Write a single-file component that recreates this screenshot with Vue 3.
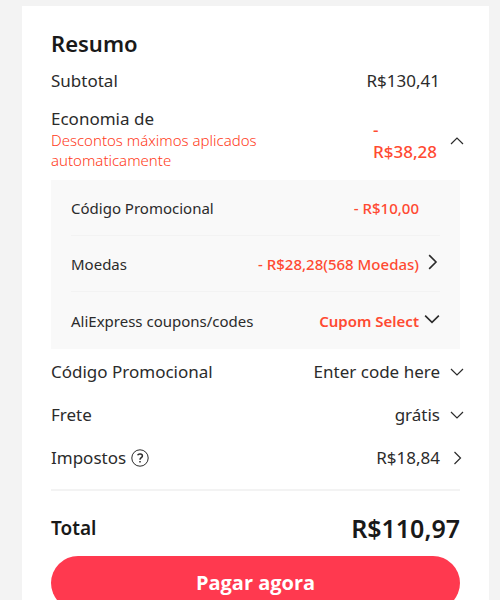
<script setup>
import { ref } from 'vue'

const savingsOpen = ref(true)

// rows of the expanded savings panel
const savings = [
  { label: 'Código Promocional', value: '- R$10,00' },
  { label: 'Moedas', value: '- R$28,28(568 Moedas)', icon: 'right' },
  { label: 'AliExpress coupons/codes', value: 'Cupom Select', icon: 'down', strong: true }
]

const rows = [
  { label: 'Código Promocional', value: 'Enter code here', icon: 'down' },
  { label: 'Frete', value: 'grátis', icon: 'down' },
  { label: 'Impostos', value: 'R$18,84', icon: 'right', help: true }
]

const arrows = {
  up: 'M1 10 L7 4 L13 10',
  down: 'M1 4 L7 10 L13 4',
  right: 'M4.5 1 L10.5 7 L4.5 13'
}
</script>

<template>
  <main class="page">
    <section class="card">
      <h1 class="title">Resumo</h1>

      <div class="row subtotal">
        <span class="label">Subtotal</span>
        <span class="value">R$130,41</span>
        <span class="slot"></span>
      </div>

      <div class="row savings">
        <div class="label">
          Economia de
          <p class="hint">Descontos máximos aplicados automaticamente</p>
        </div>
        <span class="value discount">- R$38,28</span>
        <button class="slot" type="button" aria-label="Economia de" @click="savingsOpen = !savingsOpen">
          <svg class="arrow" viewBox="0 0 14 14"><path :d="savingsOpen ? arrows.up : arrows.down" /></svg>
        </button>
      </div>

      <ul v-if="savingsOpen" class="panel">
        <li v-for="item in savings" :key="item.label" class="panel-row">
          <span class="label">{{ item.label }}</span>
          <button v-if="item.icon" class="panel-value" :class="{ strong: item.strong }" type="button">
            {{ item.value }}
            <svg class="arrow large" viewBox="0 0 14 14"><path :d="arrows[item.icon]" /></svg>
          </button>
          <span v-else class="panel-value plain">{{ item.value }}</span>
        </li>
      </ul>

      <div class="list">
        <div v-for="row in rows" :key="row.label" class="row">
          <span class="label">
            {{ row.label }}
            <button v-if="row.help" class="help" type="button" aria-label="Ajuda">
              <svg viewBox="0 0 18 18">
                <circle cx="9" cy="9" r="8.2" />
                <path d="M6.6 6.2 C7.4 4.4 11.4 4.4 11.4 6.9 C11.4 8.7 9 8.7 9 10.8" />
                <path d="M9 12 V13.6" />
              </svg>
            </button>
          </span>
          <button class="action" type="button">
            <span class="value">{{ row.value }}</span>
            <span class="slot">
              <svg class="arrow" viewBox="0 0 14 14"><path :d="arrows[row.icon]" /></svg>
            </span>
          </button>
        </div>
      </div>

      <div class="total">
        <span>Total</span>
        <strong class="amount">R$110,97</strong>
      </div>

      <button class="pay" type="button">Pagar agora</button>
    </section>
  </main>
</template>

<style>
body {
  margin: 0;
  background: #f3f3f3;
}
</style>

<style scoped>
.page {
  box-sizing: border-box;
  height: 100vh;
  overflow: hidden;
  padding: 6px 11px 0 22px;
  background: #f3f3f3;
  font-family: 'Noto Sans', 'Open Sans', sans-serif;
  font-size: 17px;
  line-height: 22px;
  font-weight: 450;
  color: #2b2b2b;
}

button {
  margin: 0;
  padding: 0;
  border: 0;
  background: none;
  font: inherit;
  color: inherit;
  cursor: pointer;
}

.card {
  padding: 22px 29px 29px;
  background: #fff;
}

.title {
  margin: 0 0 12px;
  font-size: 22px;
  line-height: 30px;
  font-weight: 600;
  color: #191919;
}

.row {
  display: flex;
  align-items: center;
}

.label {
  flex: 1;
}

.subtotal {
  margin-bottom: 16px;
}

.slot {
  display: flex;
  justify-content: flex-end;
  width: 20px;
}

.savings {
  min-height: 66px;
  margin-bottom: 6px;
}

.savings .label {
  align-self: flex-start;
}

.hint {
  width: 230px;
  margin: 0;
  font-size: 15px;
  line-height: 20px;
  font-weight: 350;
  color: #ff3a20;
}

.discount {
  width: 67px;
  font-weight: 500;
  color: #ff4a32;
}

.arrow {
  width: 14px;
  height: 14px;
  margin-right: -4px;
  fill: none;
  stroke: #2b2b2b;
  stroke-width: 1.2;
}

.panel {
  margin: 0 0 12px;
  padding: 0 20px;
  list-style: none;
  background: #f9f9f9;
}

.panel-row {
  display: flex;
  align-items: center;
  height: 55px;
  border-bottom: 1px solid #f3f3f3;
  font-size: 15px;
}

/* the last row is closed by the panel edge */
.panel-row:last-child {
  height: 57px;
  border-bottom: 0;
}

.panel-row .label {
  font-weight: 400;
}

.panel-value {
  display: flex;
  align-items: center;
  gap: 5px;
  font-weight: 500;
  color: #ff4a32;
}

.panel-value.plain {
  margin-right: 21px;
}

.panel-value.strong {
  font-weight: 600;
}

.arrow.large {
  width: 16px;
  height: 16px;
  margin: 0 0 3px;
  stroke-width: 1.4;
}

.list {
  display: flex;
  flex-direction: column;
  gap: 21px;
  padding-bottom: 20px;
  border-bottom: 2px solid #f3f3f3;
}

.list .label {
  display: flex;
  align-items: center;
  gap: 5px;
}

.action {
  display: flex;
  align-items: center;
}

.help {
  display: flex;
}

.help svg {
  width: 18px;
  height: 18px;
  fill: none;
  stroke: #2b2b2b;
  stroke-width: 1;
}

.help path {
  stroke-width: 1.5;
}

.total {
  display: flex;
  align-items: center;
  justify-content: space-between;
  margin: 19px 0 10px;
  font-size: 19px;
  line-height: 36px;
  font-weight: 600;
  color: #191919;
}

.amount {
  font-size: 25px;
  font-weight: 600;
}

.pay {
  width: 100%;
  height: 54px;
  border-radius: 27px;
  background: #ff394f;
  font-family: 'Open Sans', 'Noto Sans', sans-serif;
  font-size: 20px;
  font-weight: 700;
  color: #fff;
}
</style>
